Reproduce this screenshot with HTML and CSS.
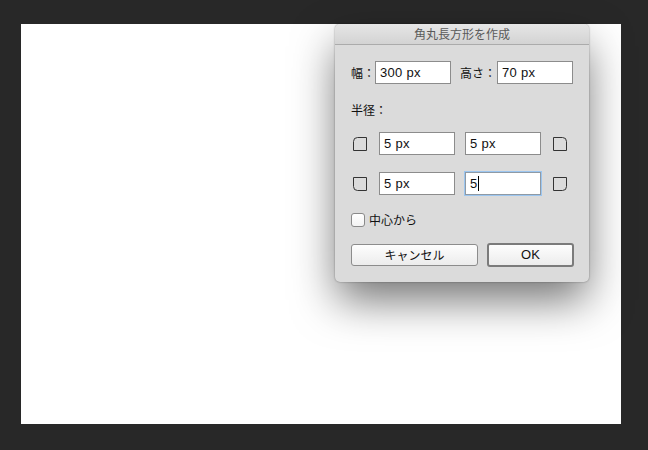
FILE: index.html
```html
<!DOCTYPE html>
<html lang="ja">
<head>
<meta charset="utf-8">
<title>角丸長方形を作成</title>
<link rel="stylesheet" href="styles.css">
</head>
<body>
<main class="canvas"></main>
<section class="dialog">
  <header class="title">角丸長方形を作成</header>
  <div class="size-row">
    <span class="label">幅：</span>
    <div class="field">300 px</div>
    <span class="label label-gap">高さ：</span>
    <div class="field">70 px</div>
  </div>
  <div class="radius-label label">半径：</div>
  <div class="corner-row">
    <svg class="corner" viewBox="0 0 14 14"><path d="M4.5 .5H13.5V13.5H.5V4.5Q.5 .5 4.5 .5Z"/></svg>
    <div class="field">5 px</div>
    <div class="field">5 px</div>
    <svg class="corner" viewBox="0 0 14 14"><path d="M.5 .5H9.5Q13.5 .5 13.5 4.5V13.5H.5Z"/></svg>
  </div>
  <div class="corner-row corner-row-next">
    <svg class="corner" viewBox="0 0 14 14"><path d="M.5 .5H13.5V13.5H4.5Q.5 13.5 .5 9.5Z"/></svg>
    <div class="field">5 px</div>
    <div class="field field-focus">5<span class="caret"></span></div>
    <svg class="corner" viewBox="0 0 14 14"><path d="M.5 .5H13.5V9.5Q13.5 13.5 9.5 13.5H.5Z"/></svg>
  </div>
  <div class="check-row">
    <span class="checkbox"></span>
    <span class="check-label">中心から</span>
  </div>
  <div class="button-row">
    <div class="button button-cancel">キャンセル</div>
    <div class="button button-ok">OK</div>
  </div>
</section>
</body>
</html>
```
FILE: styles.css
```css
html, body {
  margin: 0;
  padding: 0;
  height: 450px;
  overflow: hidden;
}

body {
  background: #282828;
  font-family: "Liberation Sans", "Noto Sans CJK JP", sans-serif;
  color: #111;
  position: relative;
}

.canvas {
  width: 600px;
  height: 400px;
  margin: 0 0 0 21px;
  position: relative;
  top: 24px;
  background: #fff;
}

.dialog {
  position: absolute;
  left: 335px;
  top: 24px;
  width: 254px;
  height: 258px;
  box-sizing: border-box;
  background: #dbdbdb;
  border-radius: 5px;
  box-shadow: 0 20px 44px -2px rgba(0, 0, 0, 0.55), 0 0 2px rgba(0, 0, 0, 0.4);
}

.title {
  height: 21px;
  box-sizing: border-box;
  border-bottom: 1px solid #ababab;
  border-radius: 5px 5px 0 0;
  background: linear-gradient(#e6e6e6, #d3d3d3);
  color: #5a5a5a;
  font: 12px/20px "Noto Sans CJK JP", sans-serif;
  text-align: center;
}

.label {
  font: 12px/16px "Noto Sans CJK JP", sans-serif;
}

.size-row {
  display: flex;
  align-items: center;
  margin-top: 16px;
  padding-left: 16px;
}

.size-row .field:last-child {
  margin-left: 1px;
}

.label-gap {
  margin-left: 9px;
}

.field {
  width: 76px;
  height: 23px;
  box-sizing: border-box;
  padding-left: 4px;
  border: 1px solid #8c8c8c;
  background: #fff;
  font: 13px/21px "Liberation Sans", sans-serif;
  letter-spacing: 0.3px;
  color: #111;
  display: flex;
  align-items: center;
}

.field-focus {
  border-color: #8f9aa5;
  box-shadow: 0 0 0 1px #9cc6f0;
}

.caret {
  width: 1px;
  height: 15px;
  background: #000;
}

.radius-label {
  margin-top: 18px;
  padding-left: 16px;
}

.corner-row {
  display: flex;
  align-items: center;
  gap: 10px;
  margin-top: 14px;
  padding-left: 18px;
}

.corner-row-next {
  margin-top: 17px;
}

.corner {
  width: 14px;
  height: 14px;
  flex: none;
}

.corner:first-child {
  margin-right: 2px;
}

.corner:last-child {
  margin-left: 2px;
}

.corner path {
  fill: none;
  stroke: #333;
  stroke-width: 1;
}

.check-row {
  display: flex;
  align-items: center;
  gap: 4px;
  margin-top: 17px;
  padding-left: 16px;
}

.checkbox {
  width: 14px;
  height: 14px;
  box-sizing: border-box;
  border: 1px solid #8a8a8a;
  border-radius: 3px;
  background: linear-gradient(#fff, #f3f3f3);
}

.check-label {
  font: 12px/14px "Noto Sans CJK JP", sans-serif;
  padding-top: 1px;
}

.button-row {
  display: flex;
  align-items: center;
  gap: 9px;
  margin-top: 16px;
  padding-left: 16px;
}

.button {
  box-sizing: border-box;
  background: linear-gradient(#fdfdfd, #ececec);
  text-align: center;
  font-family: "Liberation Sans", "Noto Sans CJK JP", sans-serif;
}

.button-cancel {
  width: 127px;
  height: 22px;
  border: 1px solid #8c8c8c;
  border-radius: 3px;
  font-size: 12px;
  line-height: 22px;
}

.button-ok {
  width: 87px;
  height: 24px;
  border: 2px solid #7b7b7b;
  border-radius: 3px;
  font-size: 13px;
  line-height: 20px;
}
```
